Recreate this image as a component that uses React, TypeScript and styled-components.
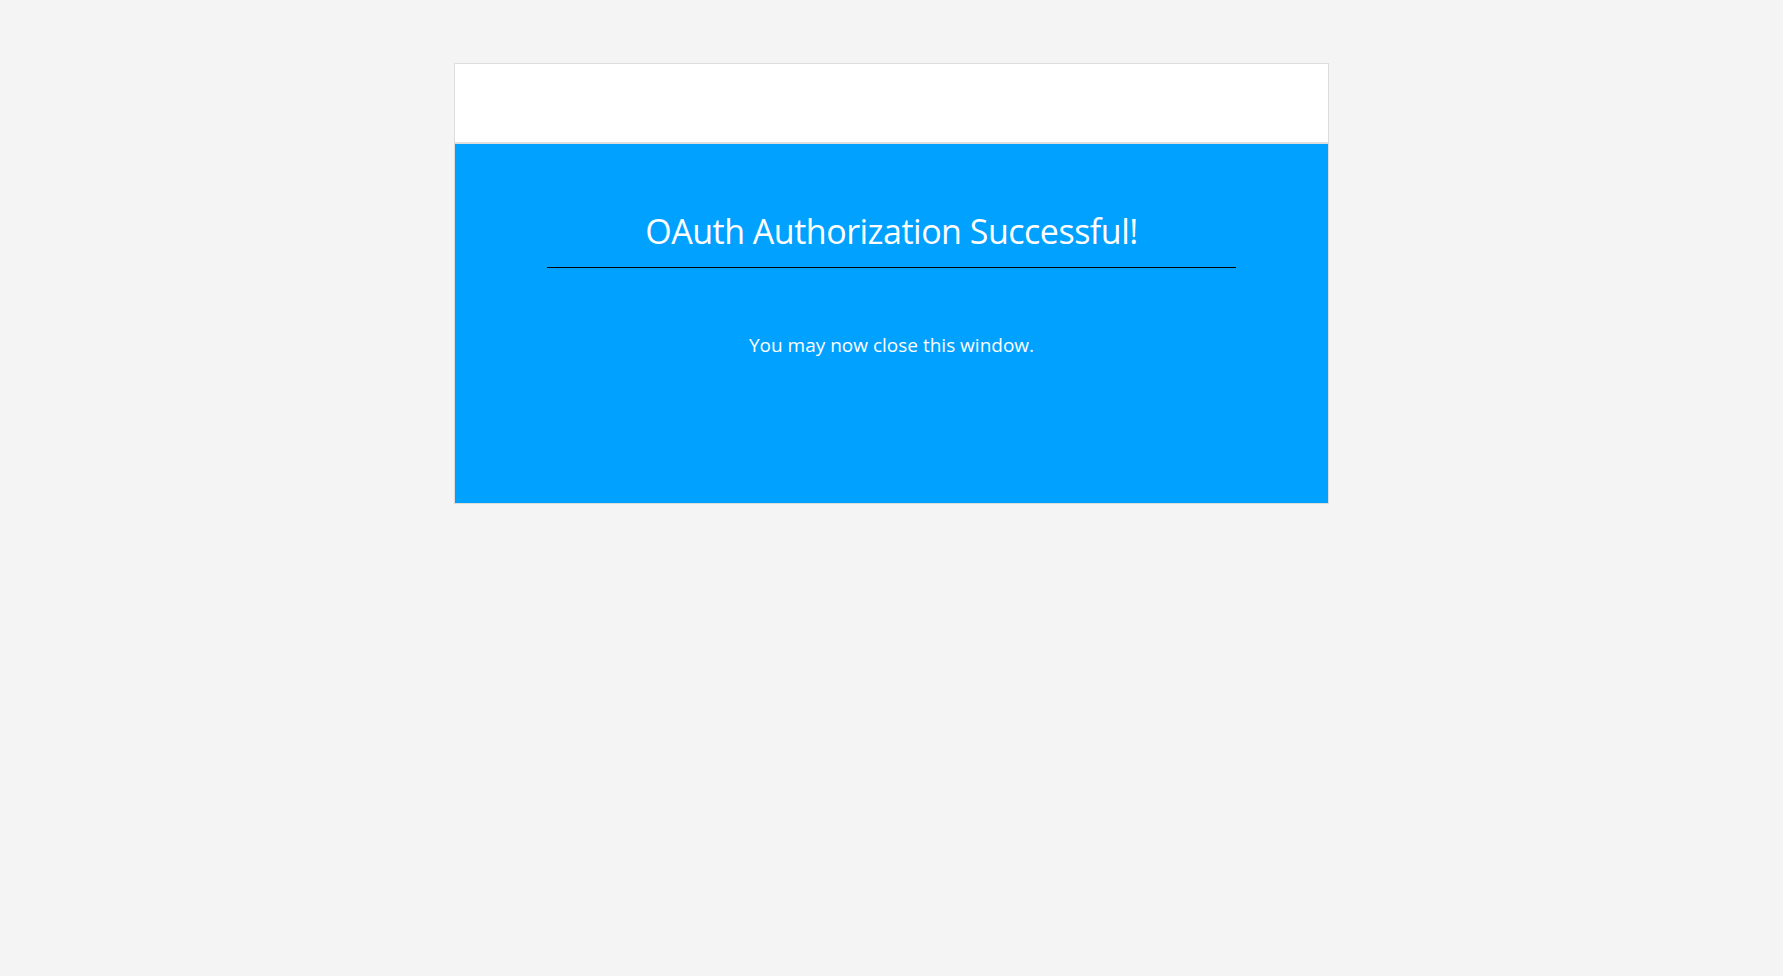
import React from "react";
import styled, { createGlobalStyle } from "styled-components";

const Global = createGlobalStyle`
  html, body {
    margin: 0;
    padding: 0;
    background: #f4f4f4;
  }
  body {
    font-family: "Open Sans", "Noto Sans", "Liberation Sans", sans-serif;
  }
`;

const Page = styled.div`
  min-height: 976px;
  display: flex;
  justify-content: center;
  align-items: flex-start;
  padding-top: 63px;
  box-sizing: border-box;
`;

const Card = styled.div`
  width: 875px;
  border: 1px solid #dcdcdc;
  border-top-color: #dedede;
  background: #ffffff;
  box-sizing: border-box;
  display: flex;
  flex-direction: column;
`;

const Header = styled.header`
  height: 78px;
  background: #ffffff;
  border-bottom: 2px solid #dedede;
`;

const Body = styled.main`
  height: 359px;
  background: #00a1ff;
  display: flex;
  flex-direction: column;
  align-items: center;
  padding: 0 92px;
`;

const Title = styled.h1`
  margin: 0;
  width: 100%;
  padding: 63px 0 12px;
  border-bottom: 1px solid #000000;
  color: #ffffff;
  font-size: 34px;
  font-weight: 400;
  letter-spacing: -0.5px;
  line-height: 48px;
  text-align: center;
`;

const Note = styled.p`
  margin: 64px 0 0;
  color: #ffffff;
  font-size: 19px;
  line-height: 26px;
  text-align: center;
`;

export default function App() {
  return (
    <>
      <Global />
      <Page>
        <Card>
          <Header />
          <Body>
            <Title>OAuth Authorization Successful!</Title>
            <Note>You may now close this window.</Note>
          </Body>
        </Card>
      </Page>
    </>
  );
}
